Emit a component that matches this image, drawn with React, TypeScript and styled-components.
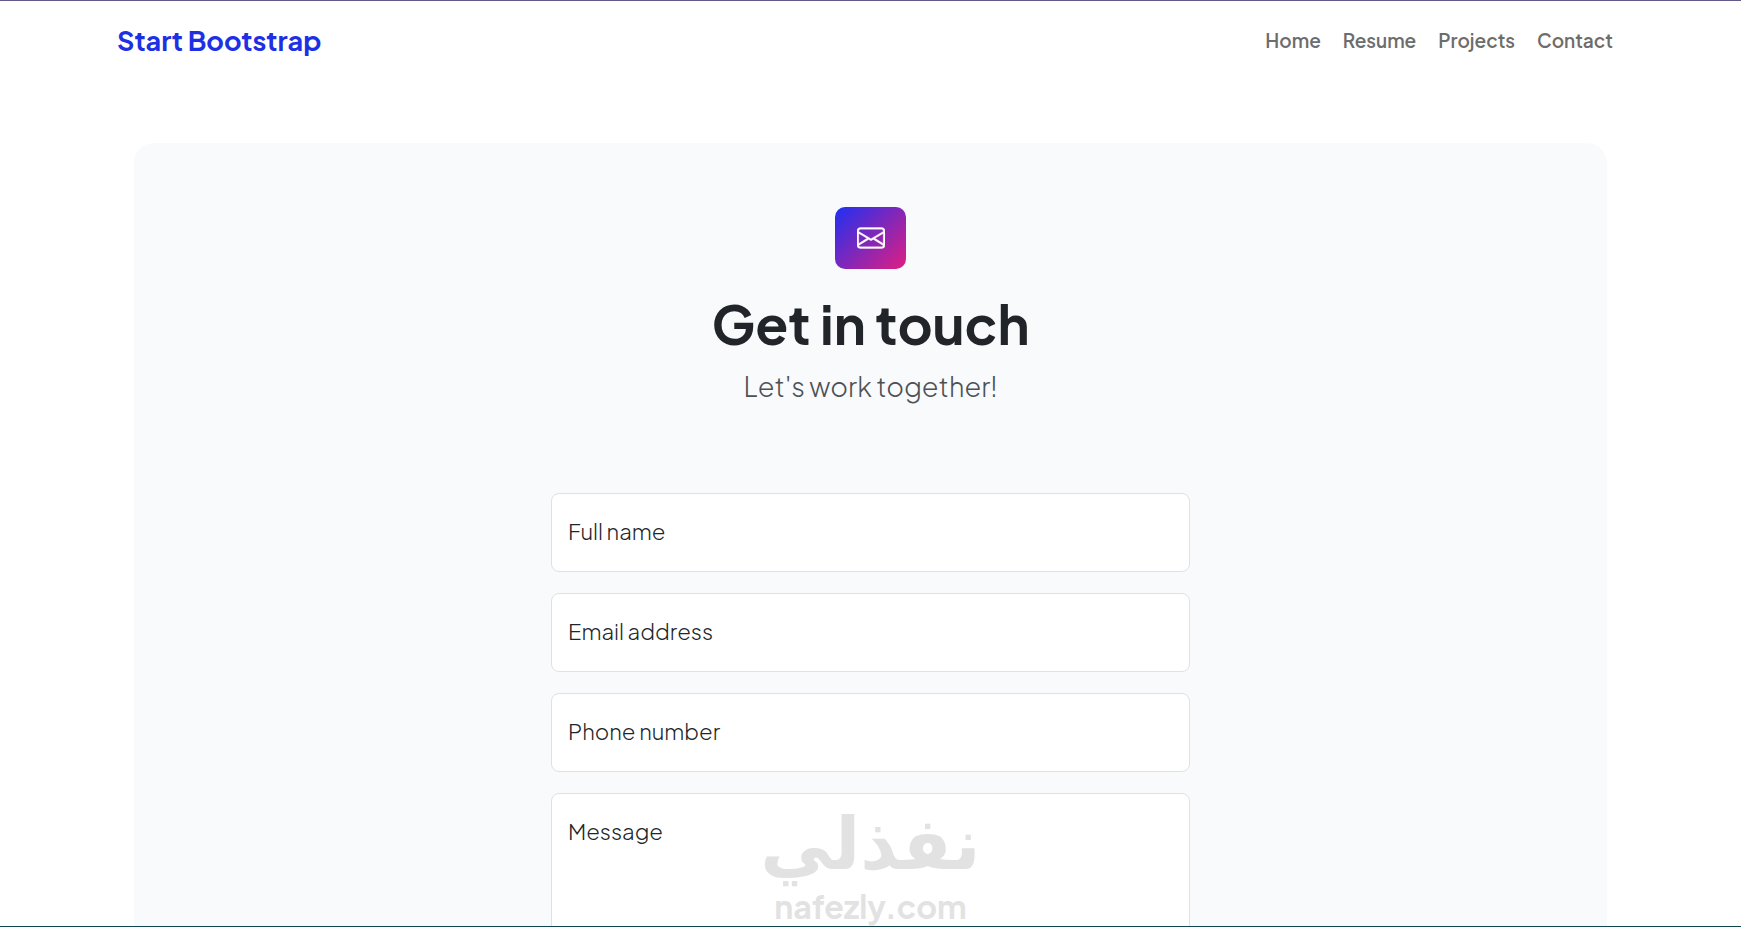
import React from "react";
import styled, { createGlobalStyle } from "styled-components";

const GlobalStyle = createGlobalStyle`
  *, *::before, *::after { box-sizing: border-box; }
  body {
    margin: 0;
    background: #fff;
    color: #212529;
    font-family: "Plus Jakarta Sans", Inter, "Liberation Sans", sans-serif;
  }
`;

const Page = styled.div`
  position: relative;
  display: flex;
  flex-direction: column;
  height: 100vh;
  overflow: hidden;
  border-top: 1px solid #645987;
  border-bottom: 1px solid #0e4650;
`;

const Navbar = styled.header`
  display: flex;
  flex-shrink: 0;
  align-items: center;
  justify-content: space-between;
  height: 78px;
  padding: 0 128px 0 117px;
`;

const Brand = styled.a`
  color: #1e30e3;
  font-size: 27px;
  font-weight: 700;
  line-height: 40px;
  text-decoration: none;
`;

const NavLinks = styled.nav`
  display: flex;
  gap: 22px;
`;

const NavLink = styled.a`
  color: #6c6d6c;
  font-size: 19px;
  font-weight: 600;
  line-height: 28px;
  text-decoration: none;
`;

const Panel = styled.main`
  flex-shrink: 0;
  margin: 64px 134px 0;
  padding: 64px 48px;
  border-radius: 20px;
  background: #f8fafc;
`;

const Intro = styled.section`
  display: flex;
  flex-direction: column;
  align-items: center;
  text-align: center;
`;

const Feature = styled.div`
  display: flex;
  align-items: center;
  justify-content: center;
  width: 71px;
  height: 62px;
  border-radius: 10px;
  background: linear-gradient(135deg, #1e30f3 0%, #e21e80 100%);
  color: #fff;
`;

const Title = styled.h1`
  margin: 20px 0 0;
  font-size: 54px;
  font-weight: 700;
  line-height: 68px;
`;

const Lead = styled.p`
  margin: 12px 0 0;
  color: #4c5155;
  font-size: 27px;
  font-weight: 300;
  line-height: 34px;
`;

const Form = styled.form`
  display: flex;
  flex-direction: column;
  gap: 21px;
  width: 100%;
  max-width: 639px;
  margin: 90px auto 0;
`;

const Field = styled.div`
  position: relative;
  display: flex;
`;

const FieldLabel = styled.label`
  position: absolute;
  top: 22px;
  left: 17px;
  font-size: 22px;
  font-weight: 300;
  line-height: 32px;
  pointer-events: none;
`;

const Input = styled.input`
  width: 100%;
  height: 79px;
  padding: 28px 18px 8px;
  border: 1px solid #dee2e6;
  border-radius: 8px;
  background: #fff;
  font: inherit;
`;

const TextArea = styled(Input).attrs({ as: "textarea" })`
  height: 220px;
  resize: none;
`;

const Watermark = styled.div`
  position: absolute;
  right: 0;
  bottom: 0;
  left: 0;
  display: flex;
  flex-direction: column;
  align-items: center;
  color: #e2e2e2;
  font-weight: 700;
  pointer-events: none;
`;

const ArabicName = styled.span`
  font-family: "DejaVu Sans", sans-serif;
  font-size: 72px;
  line-height: 84px;
`;

const SiteName = styled.span`
  font-size: 32px;
  font-weight: 700;
  line-height: 40px;
`;

const EnvelopeIcon = () => (
  <svg width="28" height="28" viewBox="0 0 16 16" fill="currentColor" stroke="currentColor" strokeWidth="0.2" aria-hidden="true">
    <path d="M0 4a2 2 0 0 1 2-2h12a2 2 0 0 1 2 2v8a2 2 0 0 1-2 2H2a2 2 0 0 1-2-2V4Zm2-1a1 1 0 0 0-1 1v.217l7 4.2 7-4.2V4a1 1 0 0 0-1-1H2Zm13 2.383-4.708 2.825L15 11.105V5.383Zm-.034 6.876-5.64-3.471L8 9.583l-1.326-.795-5.64 3.47A1 1 0 0 0 2 13h12a1 1 0 0 0 .966-.741ZM1 11.105l4.708-2.897L1 5.383v5.722Z" />
  </svg>
);

const links = ["Home", "Resume", "Projects", "Contact"];

const fields = [
  { id: "name", label: "Full name", type: "text" },
  { id: "email", label: "Email address", type: "email" },
  { id: "phone", label: "Phone number", type: "tel" },
];

export default function App() {
  return (
    <>
      <GlobalStyle />
      <Page>
        <Navbar>
          <Brand href="#home">Start Bootstrap</Brand>
          <NavLinks>
            {links.map((link) => (
              <NavLink key={link} href={`#${link.toLowerCase()}`}>{link}</NavLink>
            ))}
          </NavLinks>
        </Navbar>
        <Panel>
          <Intro>
            <Feature><EnvelopeIcon /></Feature>
            <Title>Get in touch</Title>
            <Lead>Let's work together!</Lead>
          </Intro>
          <Form>
            {fields.map(({ id, label, type }) => (
              <Field key={id}>
                <Input id={id} type={type} />
                <FieldLabel htmlFor={id}>{label}</FieldLabel>
              </Field>
            ))}
            <Field>
              <TextArea id="message" />
              <FieldLabel htmlFor="message">Message</FieldLabel>
            </Field>
          </Form>
        </Panel>
        <Watermark>
          <ArabicName lang="ar" dir="rtl">نفذلي</ArabicName>
          <SiteName>nafezly.com</SiteName>
        </Watermark>
      </Page>
    </>
  );
}
